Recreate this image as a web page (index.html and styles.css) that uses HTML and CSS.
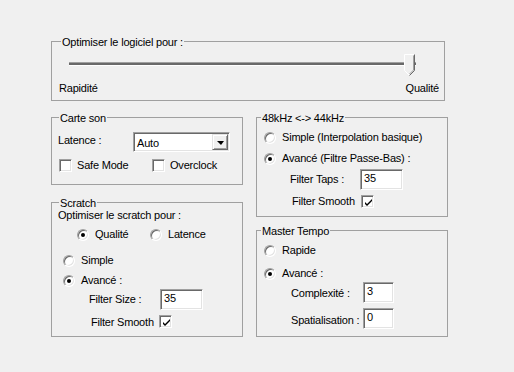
FILE: index.html
```html
<!doctype html>
<html>
  <head>
    <meta charset="utf-8"/>
    <title>Options audio</title>
    <link rel="stylesheet" href="styles.css">
  </head>
  <body>
    <div class="dialog">
      <div class="group g-quality">
        <span class="legend lg-quality">Optimiser le logiciel pour :</span>
        <div class="slider">
          <div class="track"></div>
          <svg class="thumb" width="12" height="23" viewBox="0 0 12 23">
            <polygon points="0.5,0.5 10.5,0.5 10.5,16.5 5.5,21.5 0.5,16.5" fill="#f0f0f0"/>
            <polyline points="0.5,16.5 0.5,0.5 10.5,0.5" fill="none" stroke="#fff"/>
            <polyline points="10.5,0.5 10.5,16.5 5.5,21.5" fill="none" stroke="#696969"/>
            <polyline points="9.5,1.5 9.5,16 5.5,20" fill="none" stroke="#a0a0a0"/>
            <line x1="0.5" y1="16.5" x2="5" y2="21" stroke="#fff"/>
          </svg>
        </div>
        <div class="slider-labels">
          <span>Rapidité</span>
          <span>Qualité</span>
        </div>
      </div>

      <div class="columns">
        <div class="col">
          <div class="group g-card">
            <span class="legend lg-left">Carte son</span>
            <div class="latence-row">
              <span class="latence-label">Latence :</span>
              <div class="select">
                <span class="select-text">Auto</span>
                <span class="select-btn"><span class="arrow"></span></span>
              </div>
            </div>
            <div class="check-row">
              <label class="check-item safe"><span class="checkbox"></span>Safe Mode</label>
              <label class="check-item"><span class="checkbox"></span>Overclock</label>
            </div>
          </div>

          <div class="group g-scratch">
            <span class="legend lg-left">Scratch</span>
            <div class="scratch-title">Optimiser le scratch pour :</div>
            <div class="radio-row scratch-mode">
              <label class="radio-item mode-quality"><span class="radio on"></span>Qualité</label>
              <label class="radio-item"><span class="radio"></span>Latence</label>
            </div>
            <div class="radio-row scratch-simple">
              <label class="radio-item"><span class="radio"></span>Simple</label>
            </div>
            <div class="radio-row scratch-adv">
              <label class="radio-item"><span class="radio on"></span>Avancé :</label>
            </div>
            <div class="field-row size-row">
              <span class="field-label">Filter Size :</span>
              <span class="edit edit-wide">35</span>
            </div>
            <div class="field-row smooth-row scratch-smooth">
              <span class="field-label">Filter Smooth</span>
              <span class="checkbox checked">
                <svg width="9" height="9" viewBox="0 0 9 9"><path d="M1 4v2l2 2 5-5V1L3 6z" fill="#000"/></svg>
              </span>
            </div>
          </div>
        </div>

        <div class="col">
          <div class="group g-rate">
            <span class="legend lg-right">48kHz &lt;-&gt; 44kHz</span>
            <div class="radio-row rate-simple">
              <label class="radio-item"><span class="radio"></span>Simple (Interpolation basique)</label>
            </div>
            <div class="radio-row rate-adv">
              <label class="radio-item"><span class="radio on"></span>Avancé (Filtre Passe-Bas) :</label>
            </div>
            <div class="field-row taps-row">
              <span class="field-label">Filter Taps :</span>
              <span class="edit edit-wide">35</span>
            </div>
            <div class="field-row smooth-row rate-smooth">
              <span class="field-label">Filter Smooth</span>
              <span class="checkbox checked">
                <svg width="9" height="9" viewBox="0 0 9 9"><path d="M1 4v2l2 2 5-5V1L3 6z" fill="#000"/></svg>
              </span>
            </div>
          </div>

          <div class="group g-tempo">
            <span class="legend lg-right">Master Tempo</span>
            <div class="radio-row tempo-fast">
              <label class="radio-item"><span class="radio"></span>Rapide</label>
            </div>
            <div class="radio-row tempo-adv">
              <label class="radio-item"><span class="radio on"></span>Avancé :</label>
            </div>
            <div class="field-row complex-row">
              <span class="field-label">Complexité :</span>
              <span class="edit edit-small">3</span>
            </div>
            <div class="field-row spatial-row">
              <span class="field-label">Spatialisation :</span>
              <span class="edit edit-small">0</span>
            </div>
          </div>
        </div>
      </div>
    </div>
  </body>
</html>
```

FILE: styles.css
```css
* {
  box-sizing: border-box;
}

html, body {
  margin: 0;
  background: #f0f0f0;
}

body {
  font: 11px/13px "Liberation Sans", Arial, sans-serif;
  color: #000;
  letter-spacing: -0.2px;
}

.dialog {
  padding: 41px 0 0 51px;
  width: 514px;
  height: 372px;
}

/* group boxes */
.group {
  border: 1px solid #a0a0a0;
}

.legend {
  display: table;
  margin-top: -6px;
  padding: 0 1px;
  background: #f0f0f0;
  white-space: nowrap;
}

.lg-quality { margin-left: 9px; }
.lg-left { margin-left: 7px; }
.lg-right { margin-left: 4px; }

.g-quality {
  width: 394px;
  height: 60px;
}

.columns {
  display: flex;
  gap: 13px;
  margin-top: 16px;
}

.col {
  width: 192px;
}

.g-card { height: 68px; }
.g-scratch { height: 135px; margin-top: 17px; }
.g-rate { height: 100px; }
.g-tempo { height: 107px; margin-top: 13px; }

/* slider */
.slider {
  position: relative;
  width: 347px;
  height: 24px;
  margin: 5px 0 0 17px;
  padding-top: 8px;
}

.track {
  height: 4px;
  border-top: 1px solid #a0a0a0;
  border-bottom: 1px solid #fff;
  background: #696969;
}

.thumb {
  position: absolute;
  left: 335px;
  top: 0;
}

.slider-labels {
  display: flex;
  justify-content: space-between;
  margin-top: 4px;
  padding: 0 5px 0 7px;
}

/* controls */
.checkbox {
  display: inline-flex;
  align-items: center;
  justify-content: center;
  width: 13px;
  height: 13px;
  flex: none;
  background: #fff;
  border: 1px solid;
  border-color: #a0a0a0 #fff #fff #a0a0a0;
  box-shadow: inset 1px 1px 0 #696969, inset -1px -1px 0 #e3e3e3;
}

.checkbox svg {
  margin: 1px 0 0 1px;
}

.radio {
  position: relative;
  display: inline-block;
  width: 12px;
  height: 12px;
  flex: none;
  border-radius: 50%;
  background: #fff;
  border: 1px solid;
  border-color: #a0a0a0 #fff #fff #a0a0a0;
  box-shadow: inset 1px 1px 0 #696969, inset -1px -1px 0 #e3e3e3;
}

.radio.on::after {
  content: "";
  position: absolute;
  left: 3px;
  top: 3px;
  width: 4px;
  height: 4px;
  border-radius: 50%;
  background: #000;
}

.edit {
  display: block;
  height: 21px;
  padding: 2px 0 0 3px;
  background: #fff;
  border: 1px solid;
  border-color: #a0a0a0 #fff #fff #a0a0a0;
  box-shadow: inset 1px 1px 0 #696969, inset -1px -1px 0 #e3e3e3;
}

.edit-wide { width: 43px; }
.edit-small { width: 31px; }

/* carte son */
.latence-row {
  display: flex;
  margin: 7px 0 0 6px;
}

.latence-label {
  width: 75px;
  margin-top: 2px;
}

.select {
  display: flex;
  width: 97px;
  height: 20px;
  background: #fff;
  border: 1px solid;
  border-color: #a0a0a0 #fff #fff #a0a0a0;
  box-shadow: inset 1px 1px 0 #696969, inset -1px -1px 0 #e3e3e3;
  padding: 1px;
}

.select-text {
  flex: 1;
  padding: 3px 0 0 2px;
}

.select-btn {
  display: flex;
  align-items: center;
  justify-content: center;
  width: 16px;
  height: 16px;
  background: #f0f0f0;
  border: 1px solid;
  border-color: #e3e3e3 #696969 #696969 #e3e3e3;
  box-shadow: inset 1px 1px 0 #fff, inset -1px -1px 0 #a0a0a0;
}

.arrow {
  width: 0;
  height: 0;
  border-left: 4px solid transparent;
  border-right: 3px solid transparent;
  border-top: 4px solid #000;
  margin-top: 1px;
}

.check-row {
  display: flex;
  margin: 7px 0 0 7px;
}

.check-item {
  display: flex;
  align-items: center;
  gap: 5px;
}

.check-item.safe { width: 93px; }

/* radio rows */
.radio-row {
  display: flex;
}

.radio-item {
  display: flex;
  align-items: center;
  gap: 6px;
}

.rate-simple { margin: 6px 0 0 7px; }
.rate-adv { margin: 8px 0 0 7px; }
.tempo-fast { margin: 6px 0 0 7px; }
.tempo-adv { margin: 10px 0 0 7px; }

.scratch-title { margin: -1px 0 0 6px; }
.scratch-mode { margin: 6px 0 0 25px; }
.mode-quality { width: 73px; }
.scratch-simple { margin: 13px 0 0 11px; }
.scratch-adv { margin: 7px 0 0 11px; }

/* label + field rows */
.field-row {
  display: flex;
}

.field-label {
  white-space: nowrap;
}

.taps-row { margin: 4px 0 0 33px; }
.taps-row .field-label { width: 70px; margin-top: 4px; }

.rate-smooth { margin: 5px 0 0 35px; }
.rate-smooth .field-label { width: 69px; margin-top: 0; }

.size-row { margin: 2px 0 0 37px; }
.size-row .field-label { width: 71px; margin-top: 4px; }

.scratch-smooth { margin: 5px 0 0 39px; }
.scratch-smooth .field-label { width: 68px; margin-top: 1px; }

.complex-row { margin: 2px 0 0 34px; }
.complex-row .field-label { width: 72px; margin-top: 5px; }

.spatial-row { margin: 5px 0 0 34px; }
.spatial-row .field-label { width: 72px; margin-top: 6px; }
```
